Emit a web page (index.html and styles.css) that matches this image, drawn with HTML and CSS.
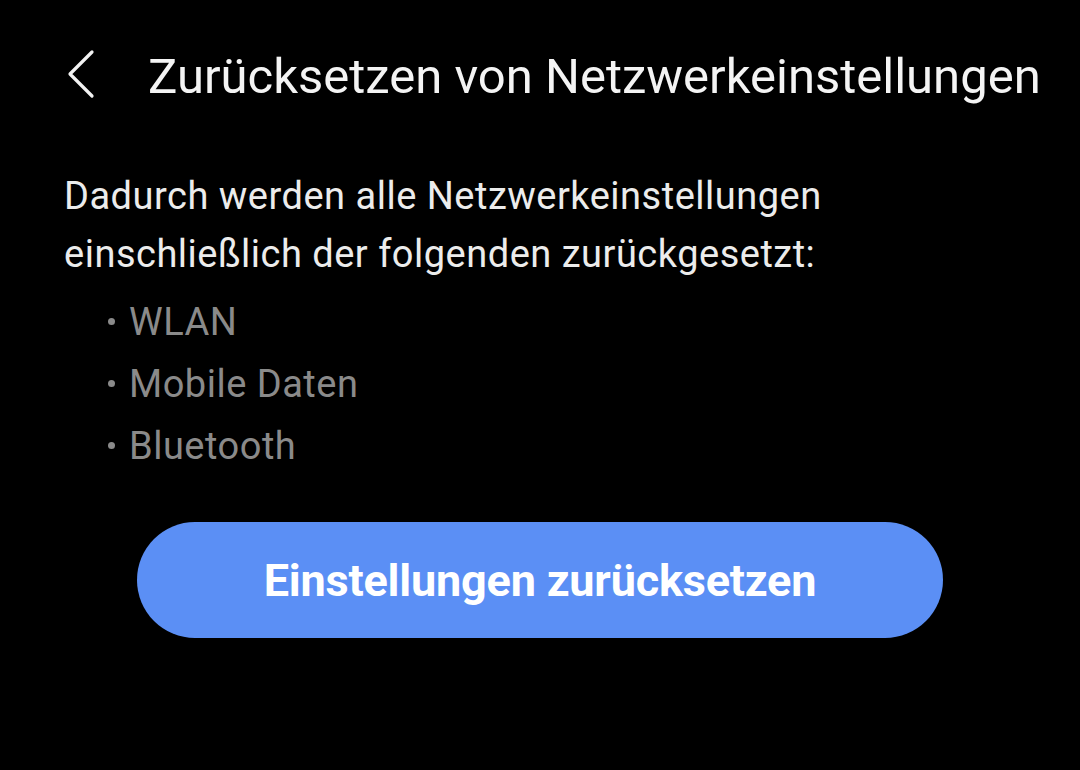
FILE: index.html
```html
<!DOCTYPE html>
<html lang="de">
<head>
<meta charset="utf-8">
<link rel="stylesheet" href="styles.css">
</head>
<body>
<div class="screen">
  <header class="topbar">
    <span class="back">
      <svg width="30" height="50" viewBox="0 0 30 50"><path d="M26 3 L4 25 L26 47" fill="none" stroke="#f2f2f2" stroke-width="3.2" stroke-linecap="round" stroke-linejoin="round"/></svg>
    </span>
    <h1 class="title">Zurücksetzen von Netzwerkeinstellungen</h1>
  </header>
  <p class="desc">Dadurch werden alle Netzwerkeinstellungen einschließlich der folgenden zurückgesetzt:</p>
  <ul class="items">
    <li>WLAN</li>
    <li>Mobile Daten</li>
    <li>Bluetooth</li>
  </ul>
  <div class="actions">
    <button class="reset">Einstellungen zurücksetzen</button>
  </div>
</div>
</body>
</html>
```
FILE: styles.css
```css
html, body {
  margin: 0;
  padding: 0;
  background: #000;
}
.screen {
  width: 1080px;
  height: 770px;
  background: #000;
  font-family: Roboto, "Noto Sans", sans-serif;
  color: #f0f0f0;
  overflow: hidden;
}
.topbar {
  display: flex;
  align-items: center;
  padding: 48px 0 0 66px;
  height: 58px;
}
.back {
  display: flex;
  width: 82px;
  margin-top: -6px;
}
.title {
  margin: 0;
  font-size: 49px;
  line-height: 58px;
  font-weight: 400;
  color: #f4f4f4;
}
.desc {
  margin: 61px 0 0 64px;
  width: 900px;
  font-size: 38px;
  line-height: 58px;
  letter-spacing: 0.5px;
  color: #ececec;
}
.items {
  list-style: none;
  margin: 8px 0 0 0;
  padding: 0 0 0 107px;
  color: #8a8a8a;
  font-size: 38px;
  line-height: 62px;
  letter-spacing: 0.5px;
}
.items li {
  position: relative;
  padding-left: 22px;
}
.items li::before {
  content: "";
  position: absolute;
  left: 1px;
  top: 27px;
  width: 7px;
  height: 7px;
  border-radius: 50%;
  background: #8a8a8a;
}
.actions {
  display: flex;
  padding: 45px 0 0 137px;
}
.reset {
  width: 806px;
  height: 116px;
  border: none;
  border-radius: 58px;
  background: #5b8ff5;
  color: #fff;
  font-family: Roboto, sans-serif;
  font-size: 45px;
  font-weight: 700;
  letter-spacing: -0.2px;
}
```
